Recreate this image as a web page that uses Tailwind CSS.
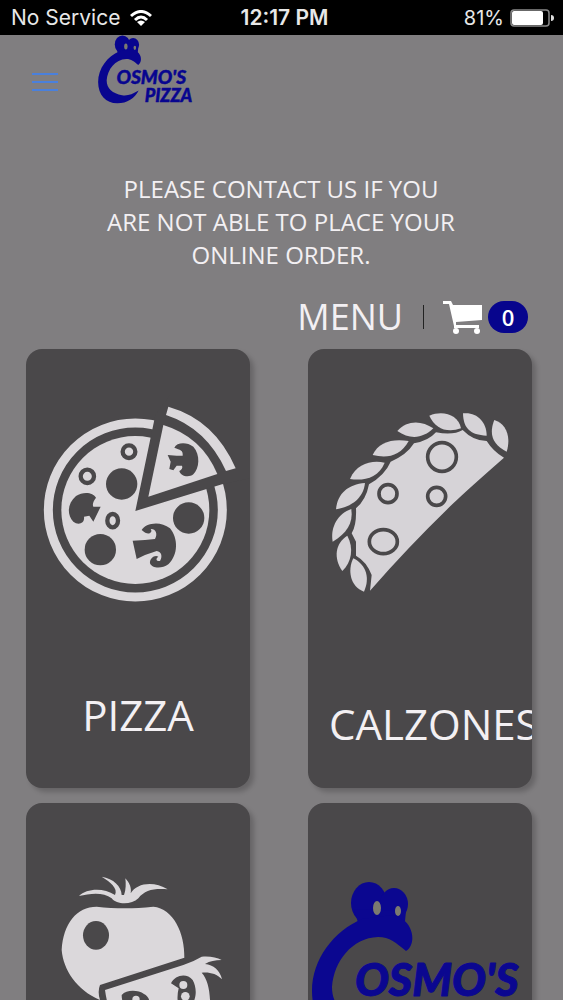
<!DOCTYPE html>
<html lang="en">
<head>
  <meta charset="UTF-8" />
  <title>Cosmo's Pizza</title>
  <meta name="viewport" content="width=device-width, initial-scale=1.0" />
  <script src="https://cdn.jsdelivr.net/npm/@tailwindcss/browser@4"></script>
</head>
<body class="h-screen overflow-hidden bg-[#807e80] font-['Open_Sans',sans-serif] text-[#f3f0f3]">

  <!-- LOGO -->
  <svg class="hidden">
    <symbol id="logo" viewBox="0 0 222 164">
      <ellipse cx="57" cy="22" rx="18" ry="21" />
      <ellipse cx="82" cy="23" rx="14" ry="16" />
      <path d="M42 28L47 45L92 50L94 30Z" />
      <path d="M94 70C101 66 102 55 98 47C95 40 88 36 80 34L50 38C22 50 0 78 0 110C0 140 18 160 45 160C68 160 86 148 95 130C80 139 69 143 56 141C34 137 20 126 20 106C22 80 40 57 66 56C78 56 84 62 94 70Z" />
      <ellipse cx="65" cy="27" rx="4" ry="7" fill="#7b7a70" />
      <ellipse cx="86" cy="30" rx="3" ry="5" fill="#7b7a70" />
      <g font-family="Lato, sans-serif" font-weight="900" font-style="italic" stroke="currentColor" stroke-width="1" stroke-linejoin="round">
        <text x="43" y="115" font-size="45">OSMO'S</text>
        <text x="109" y="158" font-size="42">PIZZA</text>
      </g>
    </symbol>
  </svg>

  <!-- STATUS BAR -->
  <div class="grid h-[35px] grid-cols-3 items-center bg-black pr-[9px] pl-[11px] font-['Inter',sans-serif] text-[21px] text-[#e8e8e8]">
    <div class="flex items-center gap-[10px] whitespace-nowrap">
      <span>No Service</span>
      <svg class="h-4 w-[22px] shrink-0" viewBox="0 0 22 16" fill="none" stroke="#fff" stroke-width="3">
        <path d="M1 6Q11 -3 21 6" />
        <path d="M5 10Q11 4 17 10" />
        <path d="M11 16L7 12Q11 9 15 12Z" fill="#fff" stroke="none" />
      </svg>
    </div>
    <div class="pl-1 text-center font-semibold whitespace-nowrap">12:17 PM</div>
    <div class="flex items-center justify-end gap-[6px]">
      <span class="text-xl">81%</span>
      <svg class="h-[18px] w-[44px]" viewBox="0 0 44 18">
        <rect x="1" y="1" width="38" height="16" rx="3" fill="none" stroke="#8a8a8a" stroke-width="1.5" />
        <rect x="2" y="2" width="31" height="14" rx="2" fill="#fff" />
        <path d="M41 6Q44 6 44 9Q44 12 41 12Z" fill="#ddd" />
      </svg>
    </div>
  </div>

  <header class="flex h-[137px] items-start pl-8">
    <button aria-label="Open menu" class="mt-[38px] flex w-[26px] flex-col gap-[6px]">
      <span class="h-[2px] w-full bg-[#4a80dc]"></span>
      <span class="h-[2px] w-full bg-[#4a80dc]"></span>
      <span class="h-[2px] w-full bg-[#4a80dc]"></span>
    </button>
    <a href="#" aria-label="Cosmo's Pizza" class="ml-10">
      <svg class="h-[70px] w-[95px] fill-current text-[#08058f]"><use href="#logo" /></svg>
    </a>
  </header>

  <main class="pr-[31px] pl-[26px]">
    <p class="pl-1 text-center text-2xl leading-[33px]">PLEASE CONTACT US IF YOU<br />ARE NOT ABLE TO PLACE YOUR<br />ONLINE ORDER.</p>

    <div class="mt-6 flex h-11 items-center justify-end pr-1">
      <h1 class="text-4xl">MENU</h1>
      <span class="ml-5 h-6 w-px bg-[#222]"></span>
      <a href="#" class="ml-[19px] flex items-center gap-[5px]">
        <svg class="h-[34px] w-10" viewBox="0 0 40 34" fill="#fff">
          <path d="M0 1H8L10 5H39V20L13 22V25H36V28H11V26L6 4H0Z" />
          <circle cx="13" cy="31" r="3" />
          <circle cx="34" cy="31" r="3" />
        </svg>
        <span class="flex h-8 w-10 items-center justify-center rounded-full bg-[#07058d] text-[22px] font-semibold text-white">0</span>
      </a>
    </div>

    <div class="mt-[10px] grid grid-cols-2 gap-x-[58px] gap-y-[15px]">
      <!-- PIZZA -->
      <a href="#" class="block h-[439px] overflow-hidden rounded-2xl bg-[#4a484a] pt-[46px] shadow-[4px_4px_5px_rgba(0,0,0,0.2)]">
        <svg class="w-full" viewBox="-12 0 672 660" fill="#dbd8db">
          <circle cx="316" cy="345" r="261" fill="none" stroke="#dbd8db" stroke-width="27" />
          <circle cx="316" cy="345" r="222" />
          <path fill="#4a484a" d="M316 348L376 60L420 0H660V250L576 268Z" />
          <path d="M400 90L355 305L562 237Q515 125 400 90Z" />
          <path d="M415 35Q555 75 617 220L588 228Q530 100 408 60Z" />
          <g fill="#4a484a">
            <circle cx="275" cy="267" r="47" />
            <circle cx="476" cy="369" r="47" />
            <circle cx="211" cy="464" r="47" />
            <path d="M433 158C440 142 470 140 490 155C512 180 508 220 490 238C475 250 450 242 448 228C455 225 459 218 456 212L440 212L430 226L418 222L422 200L413 180L440 182L458 182C460 165 450 165 433 158Z" />
            <path d="M198 308C190 292 160 288 138 303C112 325 110 360 130 380C145 392 165 385 162 365L178 362L190 380L212 335L190 335Q185 325 198 308Z" />
            <path d="M335 405C345 385 390 375 420 400C445 430 445 480 415 508C395 523 365 520 360 505C358 490 375 478 385 485C375 492 380 500 390 498C398 485 395 470 380 468L345 480L320 492L308 437L345 435L375 432C385 415 375 400 362 402C370 412 355 425 335 405Z" />
          </g>
          <g fill="none" stroke="#4a484a" stroke-width="13">
            <circle cx="297" cy="170" r="19" />
            <circle cx="172" cy="244" r="20" />
            <ellipse cx="248" cy="377" rx="16" ry="20" />
          </g>
        </svg>
        <h2 class="mt-[70px] text-center text-[42px] leading-[60px]">PIZZA</h2>
      </a>

      <!-- CALZONES -->
      <a href="#" class="block h-[439px] overflow-hidden rounded-2xl bg-[#4a484a] pt-[46px] shadow-[4px_4px_5px_rgba(0,0,0,0.2)]">
        <svg class="w-full" viewBox="-6 0 672 660" fill="#d6d3d7">
          <path d="M180 587L185 540Q170 500 138 482L138 440L125 415Q140 390 138 340Q168 315 177 268Q225 240 242 200Q290 180 312 145Q355 138 378 112Q430 122 458 105Q490 138 530 138Q550 170 582 188Q460 295 430 325Q300 450 180 587Z" />
          <path d="M553 75C585 85 605 120 590 170C550 150 535 120 553 75Z" />
          <path d="M459 55C500 50 530 80 530 122C480 120 460 100 459 55Z" />
          <path d="M358 62C400 45 445 60 453 100C410 115 375 100 358 62Z" />
          <path d="M262 108C290 75 335 75 370 100C340 130 300 135 262 108Z" />
          <path d="M188 180C205 140 250 130 296 138C270 185 230 190 188 180Z" />
          <path d="M120 252C140 205 185 195 224 203C205 250 160 258 120 252Z" />
          <path d="M78 343C82 295 115 268 165 264C160 310 125 335 78 343Z" />
          <path d="M68 440C60 395 85 355 124 342C130 385 110 415 68 440Z" />
          <path d="M97 528C70 490 75 445 112 422C132 460 125 500 97 528Z" />
          <path d="M162 590C120 575 112 525 130 490C170 510 180 550 162 590Z" />
          <g fill="none" stroke="#4a484a" stroke-width="11">
            <circle cx="396" cy="186" r="43" />
            <circle cx="234" cy="296" r="27" />
            <circle cx="380" cy="304" r="27" />
            <ellipse cx="220" cy="440" rx="42" ry="36" />
          </g>
        </svg>
        <h2 class="mt-[79px] pl-[21px] text-[42px] leading-[60px]">CALZONES</h2>
      </a>

      <!-- SALADS -->
      <a href="#" aria-label="Vegetables" class="block h-[439px] overflow-hidden rounded-2xl bg-[#4a484a] pt-[46px] shadow-[4px_4px_5px_rgba(0,0,0,0.2)]">
        <svg class="w-full" viewBox="18 -33 672 660" fill="#dbd8db">
          <path d="M177 108C200 85 250 82 285 105C295 85 270 65 245 50C280 55 305 80 305 105L312 105C318 90 318 70 316 55C330 70 335 85 332 100C350 70 400 62 443 88C400 85 375 90 355 115C335 135 290 135 275 115C250 95 210 100 177 108Z" />
          <path d="M125 270C130 190 170 140 230 140C280 145 330 148 400 140C460 145 495 220 493 293L240 375Q232 395 240 420C170 390 130 330 125 270Z" />
          <path d="M255 390L490 315Q520 305 545 290C570 288 590 292 605 300C585 300 570 303 555 312C580 315 600 330 606 358C590 340 565 335 545 338C565 360 572 400 570 450C570 530 500 590 420 600C330 590 270 500 255 390Z" />
          <g fill="#4a484a">
            <ellipse cx="228" cy="226" rx="39" ry="43" />
            <path d="M453 370C465 345 500 338 518 360C535 390 530 440 490 450C470 440 470 410 476 385Z" />
            <path d="M305 405C320 388 355 390 372 402C400 415 395 470 360 480C330 470 305 440 305 405Z" />
          </g>
          <circle cx="490" cy="375" r="12" />
          <circle cx="496" cy="409" r="13" />
          <circle cx="348" cy="418" r="11" />
        </svg>
      </a>

      <!-- SPECIALS -->
      <a href="#" aria-label="Cosmo's specials" class="block h-[439px] overflow-hidden rounded-2xl bg-[#4a484a] pt-[78px] pl-1 shadow-[4px_4px_5px_rgba(0,0,0,0.2)]">
        <svg class="h-[164px] w-[222px] fill-current text-[#0b0790]"><use href="#logo" /></svg>
      </a>
    </div>
  </main>

</body>
</html>
